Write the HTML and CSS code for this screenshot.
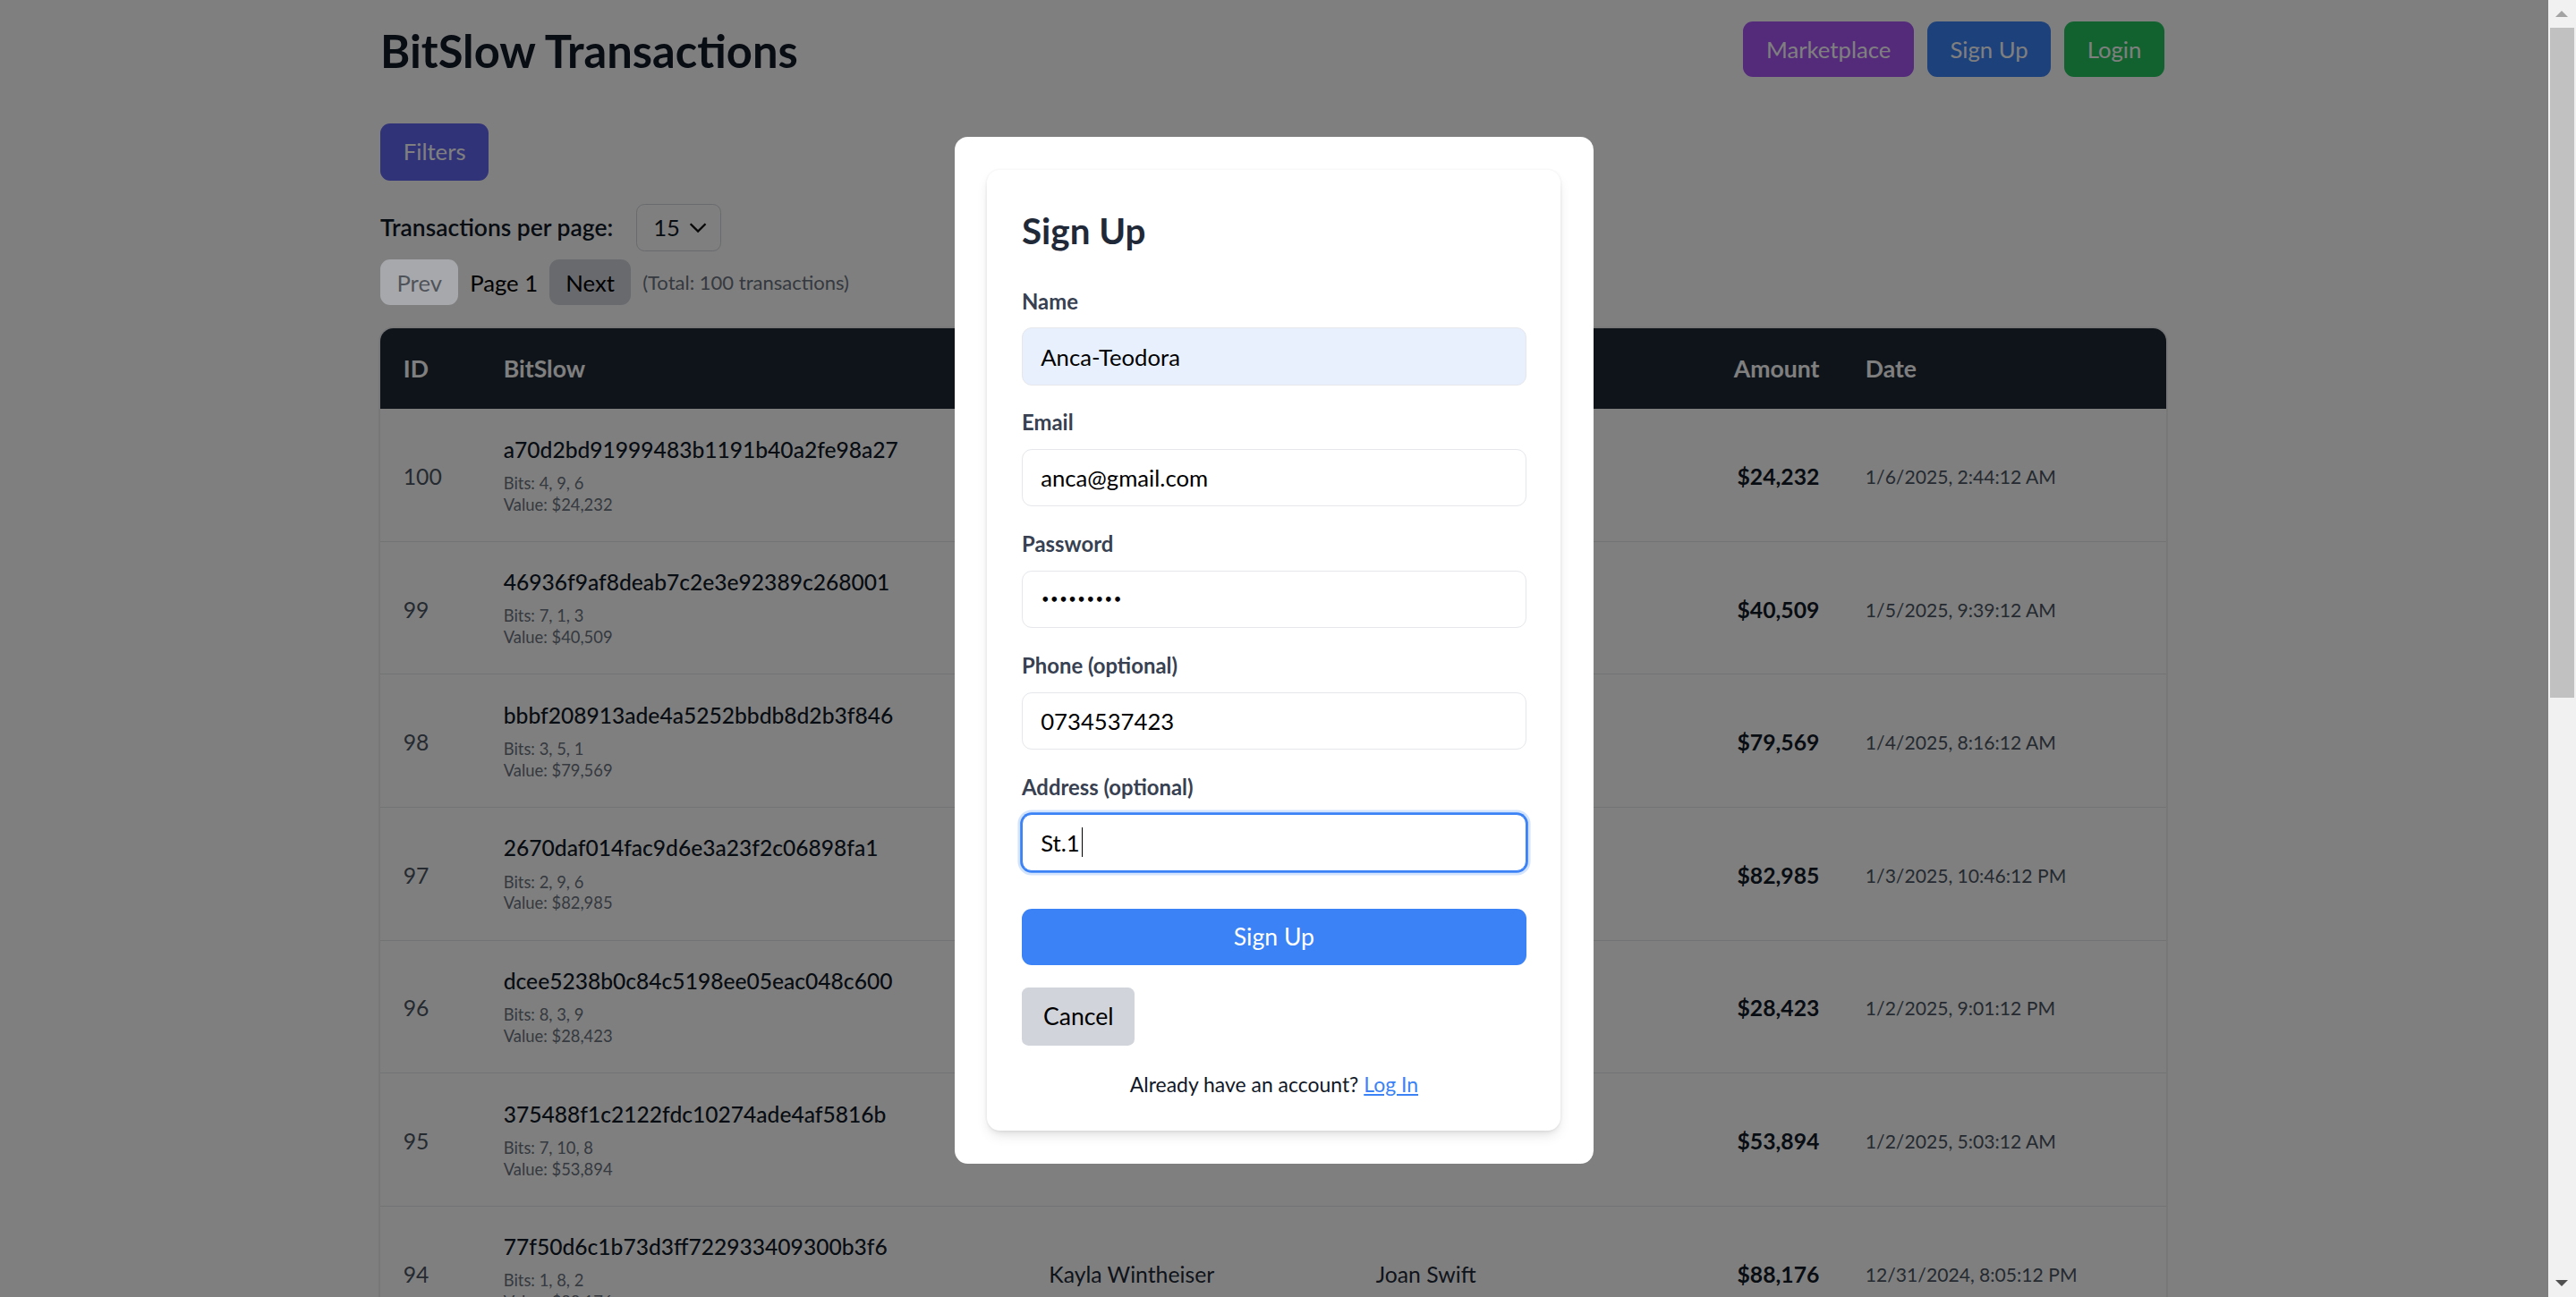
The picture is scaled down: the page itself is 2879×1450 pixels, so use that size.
FILE: index.html
```html
<!DOCTYPE html>
<html lang="en">
<head>
<meta charset="utf-8">
<title>BitSlow Transactions</title>
<link rel="stylesheet" href="styles.css">
</head>
<body>
<div class="app">
  <div class="main">
    <div class="container">
      <header class="topbar">
        <h1 class="title">BitSlow Transactions</h1>
        <nav class="nav">
          <button class="btn btn-purple">Marketplace</button>
          <button class="btn btn-blue">Sign Up</button>
          <button class="btn btn-green">Login</button>
        </nav>
      </header>

      <div class="toolbar">
        <button class="btn btn-indigo">Filters</button>
      </div>

      <div class="perpage">
        <span class="perpage-label">Transactions per page:</span>
        <div class="select">
          <span>15</span>
          <svg class="chev" viewBox="0 0 12 7" width="11" height="7"><polyline points="1,1 6,6 11,1" fill="none" stroke="#111" stroke-width="1.4"/></svg>
        </div>
      </div>

      <div class="pager">
        <button class="pg-btn pg-prev">Prev</button>
        <span class="pg-page">Page 1</span>
        <button class="pg-btn pg-next">Next</button>
        <span class="pg-total">(Total: 100 transactions)</span>
      </div>

      <div class="table-wrap">
        <table class="tx">
          <colgroup>
            <col class="c-id"><col class="c-bit"><col class="c-seller"><col class="c-buyer"><col class="c-amt"><col class="c-date">
          </colgroup>
          <thead>
            <tr><th>ID</th><th>BitSlow</th><th>Seller</th><th>Buyer</th><th class="r">Amount</th><th>Date</th></tr>
          </thead>
          <tbody>
            <tr>
              <td class="id">100</td>
              <td><div class="hash">a70d2bd91999483b1191b40a2fe98a27</div><div class="meta">Bits: 4, 9, 6</div><div class="meta">Value: $24,232</div></td>
              <td class="name">Ruben Kshlerin</td><td class="name">Maddison Hayes</td>
              <td class="amt">$24,232</td><td class="date">1/6/2025, 2:44:12 AM</td>
            </tr>
            <tr>
              <td class="id">99</td>
              <td><div class="hash">46936f9af8deab7c2e3e92389c268001</div><div class="meta">Bits: 7, 1, 3</div><div class="meta">Value: $40,509</div></td>
              <td class="name">Lela Bogan</td><td class="name">Arturo Gleichner</td>
              <td class="amt">$40,509</td><td class="date">1/5/2025, 9:39:12 AM</td>
            </tr>
            <tr>
              <td class="id">98</td>
              <td><div class="hash">bbbf208913ade4a5252bbdb8d2b3f846</div><div class="meta">Bits: 3, 5, 1</div><div class="meta">Value: $79,569</div></td>
              <td class="name">Dewayne Ritchie</td><td class="name">Kaitlyn Schmitt</td>
              <td class="amt">$79,569</td><td class="date">1/4/2025, 8:16:12 AM</td>
            </tr>
            <tr>
              <td class="id">97</td>
              <td><div class="hash">2670daf014fac9d6e3a23f2c06898fa1</div><div class="meta">Bits: 2, 9, 6</div><div class="meta">Value: $82,985</div></td>
              <td class="name">Velma Bauch</td><td class="name">Ottis Rempel</td>
              <td class="amt">$82,985</td><td class="date">1/3/2025, 10:46:12 PM</td>
            </tr>
            <tr>
              <td class="id">96</td>
              <td><div class="hash">dcee5238b0c84c5198ee05eac048c600</div><div class="meta">Bits: 8, 3, 9</div><div class="meta">Value: $28,423</div></td>
              <td class="name">Cordell Mann</td><td class="name">Alysa Kuhic</td>
              <td class="amt">$28,423</td><td class="date">1/2/2025, 9:01:12 PM</td>
            </tr>
            <tr>
              <td class="id">95</td>
              <td><div class="hash">375488f1c2122fdc10274ade4af5816b</div><div class="meta">Bits: 7, 10, 8</div><div class="meta">Value: $53,894</div></td>
              <td class="name">Hattie Kiehn</td><td class="name">Giovanni Beer</td>
              <td class="amt">$53,894</td><td class="date">1/2/2025, 5:03:12 AM</td>
            </tr>
            <tr>
              <td class="id">94</td>
              <td><div class="hash">77f50d6c1b73d3ff722933409300b3f6</div><div class="meta">Bits: 1, 8, 2</div><div class="meta">Value: $88,176</div></td>
              <td class="name">Kayla Wintheiser</td><td class="name">Joan Swift</td>
              <td class="amt">$88,176</td><td class="date">12/31/2024, 8:05:12 PM</td>
            </tr>
            <tr>
              <td class="id">93</td>
              <td><div class="hash">c41e9a07d2b85f3361a0e7bb94d2c518</div><div class="meta">Bits: 5, 2, 7</div><div class="meta">Value: $61,310</div></td>
              <td class="name">Emory Larson</td><td class="name">Dana Crist</td>
              <td class="amt">$61,310</td><td class="date">12/30/2024, 3:22:12 PM</td>
            </tr>
          </tbody>
        </table>
      </div>
    </div>

    <div class="overlay">
      <div class="modal">
        <form class="card">
          <h2 class="card-title">Sign Up</h2>
          <div class="field">
            <label class="label">Name</label>
            <div class="input autofill">Anca-Teodora</div>
          </div>
          <div class="field">
            <label class="label">Email</label>
            <div class="input">anca@gmail.com</div>
          </div>
          <div class="field">
            <label class="label">Password</label>
            <div class="input dots">•••••••••</div>
          </div>
          <div class="field">
            <label class="label">Phone (optional)</label>
            <div class="input">0734537423</div>
          </div>
          <div class="field">
            <label class="label">Address (optional)</label>
            <div class="input focused">St.1<span class="caret"></span></div>
          </div>
          <button type="button" class="submit">Sign Up</button>
          <button type="button" class="cancel">Cancel</button>
          <p class="switch">Already have an account? <a class="link">Log In</a></p>
        </form>
      </div>
    </div>
  </div>

  <div class="scrollbar">
    <div class="sb-arrow sb-up"></div>
    <div class="sb-track"><div class="sb-thumb"></div></div>
    <div class="sb-arrow sb-down"></div>
  </div>
</div>
</body>
</html>
```

FILE: styles.css
```css
html {
  zoom: 1.836097;
  overflow: hidden;
}

body {
  margin: 0;
  font-family: Lato, "Open Sans", "Noto Sans", sans-serif;
  color: #111827;
  background: #ffffff;
}

button {
  font-family: inherit;
  cursor: pointer;
}

.app {
  display: flex;
  width: 1568px;
  height: 790px;
  overflow: hidden;
}

.main {
  position: relative;
  width: 1551px;
  height: 790px;
  overflow: hidden;
  background: #ffffff;
  flex: none;
}

.container {
  width: 1088px;
  margin: 0 auto;
  padding-top: 13px;
}

/* header */
.topbar {
  display: flex;
  justify-content: space-between;
  align-items: center;
  height: 34px;
  padding-right: 2px;
}

.title {
  margin: 0;
  font-size: 27.6px;
  line-height: 34px;
  font-weight: 700;
  color: #111827;
  position: relative;
  top: 1px;
}

.nav {
  display: flex;
  gap: 8px;
}

.btn {
  height: 34px;
  padding: 0 14px;
  border: 0;
  border-radius: 6px;
  color: #ffffff;
  font-size: 14px;
  line-height: 20px;
}

.btn-purple { background: #a855f7; }
.btn-blue { background: #3b82f6; }
.btn-green { background: #22c55e; }
.btn-indigo { background: #6366f1; height: 35px; padding: 0 14px; }

.toolbar {
  margin-top: 28px;
  display: flex;
}

/* per page */
.perpage {
  margin-top: 14px;
  display: flex;
  align-items: center;
  gap: 14px;
  height: 29px;
}

.perpage-label {
  font-size: 14.4px;
  font-weight: 600;
  color: #111827;
}

.select {
  width: 52px;
  height: 29px;
  box-sizing: border-box;
  border: 1px solid #d1d5db;
  border-radius: 5px;
  display: flex;
  align-items: center;
  justify-content: space-between;
  padding: 0 8px 0 10px;
  font-size: 14px;
  color: #111827;
  background: #fff;
}

.chev { display: block; }

/* pager */
.pager {
  margin-top: 5px;
  display: flex;
  align-items: center;
  gap: 7px;
  height: 28px;
}

.pg-btn {
  height: 28px;
  padding: 0 10px;
  border: 0;
  border-radius: 6px;
  font-size: 14px;
}

.pg-prev {
  position: relative;
  z-index: 11;
  opacity: 0.5;
  background: #cfd2d8;
  color: #1f2937;
}

.pg-next {
  background: #d1d5db;
  color: #000000;
}

.pg-page {
  font-size: 14px;
  color: #000000;
}

.pg-total {
  font-size: 12px;
  color: #6b7280;
}

/* table */
.table-wrap {
  margin-top: 14px;
  border-radius: 8px 8px 0 0;
  overflow: hidden;
  box-shadow: 0 0 0 1px #eeeff1;
  margin-right: 1px;
}

.tx {
  width: 1087px;
  border-collapse: collapse;
  table-layout: fixed;
}

.c-id { width: 61px; }
.c-bit { width: 332px; }
.c-seller { width: 199px; }
.c-buyer { width: 188px; }
.c-amt { width: 110px; }
.c-date { width: 197px; }

.tx thead tr {
  background: #1f2937;
}

.tx th {
  height: 49px;
  padding: 0 14px;
  text-align: left;
  color: #ffffff;
  font-size: 14.5px;
  font-weight: 700;
}

.tx th.r { text-align: right; }

.tx td {
  padding: 15px 14px 15.4px;
  border-bottom: 1px solid #e5e7eb;
  vertical-align: middle;
  background: #ffffff;
}

.tx td.id {
  font-size: 13.5px;
  color: #4b5563;
  padding-top: 17px;
}

.hash {
  font-size: 13.4px;
  line-height: 20px;
  font-weight: 500;
  color: #111827;
  margin-bottom: 4px;
}

.meta {
  font-size: 10px;
  line-height: 13px;
  color: #6b7280;
}

.tx td.name {
  font-size: 13.5px;
  color: #1f2937;
  padding-top: 17px;
}

.tx td.amt {
  text-align: right;
  font-size: 13.5px;
  font-weight: 700;
  color: #111827;
  padding-top: 17px;
}

.tx td.date {
  font-size: 11.5px;
  color: #4b5563;
  padding-top: 17px;
}

/* overlay + modal */
.overlay {
  position: absolute;
  inset: 0;
  z-index: 10;
  background: rgba(0, 0, 0, 0.5);
  display: flex;
  align-items: center;
  justify-content: center;
  padding-top: 2px;
}

.modal {
  width: 389px;
  box-sizing: border-box;
  padding: 20px;
  background: #ffffff;
  border-radius: 8px;
}

.card {
  margin: 0;
  padding: 23px 21px 19px;
  background: #ffffff;
  border-radius: 8px;
  box-shadow: 0 4px 8px -2px rgba(0, 0, 0, 0.12), 0 2px 4px -2px rgba(0, 0, 0, 0.08), 0 0 0 1px rgba(0, 0, 0, 0.02);
  display: flex;
  flex-direction: column;
}

.card-title {
  margin: 0 0 19px;
  font-size: 22px;
  line-height: 28px;
  font-weight: 700;
  color: #1f2937;
}

.field {
  display: flex;
  flex-direction: column;
  margin-bottom: 13px;
}

.label {
  font-size: 13px;
  line-height: 20px;
  font-weight: 700;
  color: #374151;
  margin-bottom: 6px;
}

.input {
  height: 35px;
  box-sizing: border-box;
  border: 1px solid #e5e7eb;
  border-radius: 6px;
  padding: 0 11px;
  display: flex;
  align-items: center;
  font-size: 14px;
  color: #000000;
  background: #ffffff;
}

.autofill {
  background: #e8f0fe;
}

.dots {
  font-family: "DejaVu Sans", sans-serif;
  font-size: 8.6px;
  letter-spacing: 0;
  font-weight: 700;
}

.focused {
  border-color: #3b82f6;
  box-shadow: 0 0 0 1px #3b82f6, 0 0 0 2.5px rgba(59, 130, 246, 0.22);
}

.caret {
  display: inline-block;
  width: 1px;
  height: 18px;
  margin-left: 1px;
  background: #000000;
}

.submit {
  margin-top: 10px;
  height: 34px;
  border: 0;
  border-radius: 6px;
  background: #3b82f6;
  color: #ffffff;
  font-size: 14.5px;
}

.cancel {
  margin-top: 14px;
  align-self: flex-start;
  height: 35px;
  padding: 0 13px;
  border: 0;
  border-radius: 4px;
  background: #d1d5db;
  color: #000000;
  font-size: 14.5px;
}

.switch {
  margin: 15px 0 0;
  text-align: center;
  font-size: 12.5px;
  line-height: 18px;
  color: #111827;
}

.link {
  color: #3b82f6;
  text-decoration: underline;
}

/* fake scrollbar */
.scrollbar {
  width: 17px;
  height: 790px;
  background: #f1f1f1;
  display: flex;
  flex-direction: column;
  flex: none;
}

.sb-arrow {
  height: 17px;
  flex: none;
  display: flex;
  align-items: center;
  justify-content: center;
}

.sb-up::before {
  content: "";
  border-left: 4px solid transparent;
  border-right: 4px solid transparent;
  border-bottom: 4px solid #a3a3a3;
}

.sb-down::before {
  content: "";
  border-left: 4px solid transparent;
  border-right: 4px solid transparent;
  border-top: 4px solid #505050;
}

.sb-track {
  flex: 1;
  padding: 0 1px;
}

.sb-thumb {
  height: 408px;
  background: #c1c1c1;
}
```
